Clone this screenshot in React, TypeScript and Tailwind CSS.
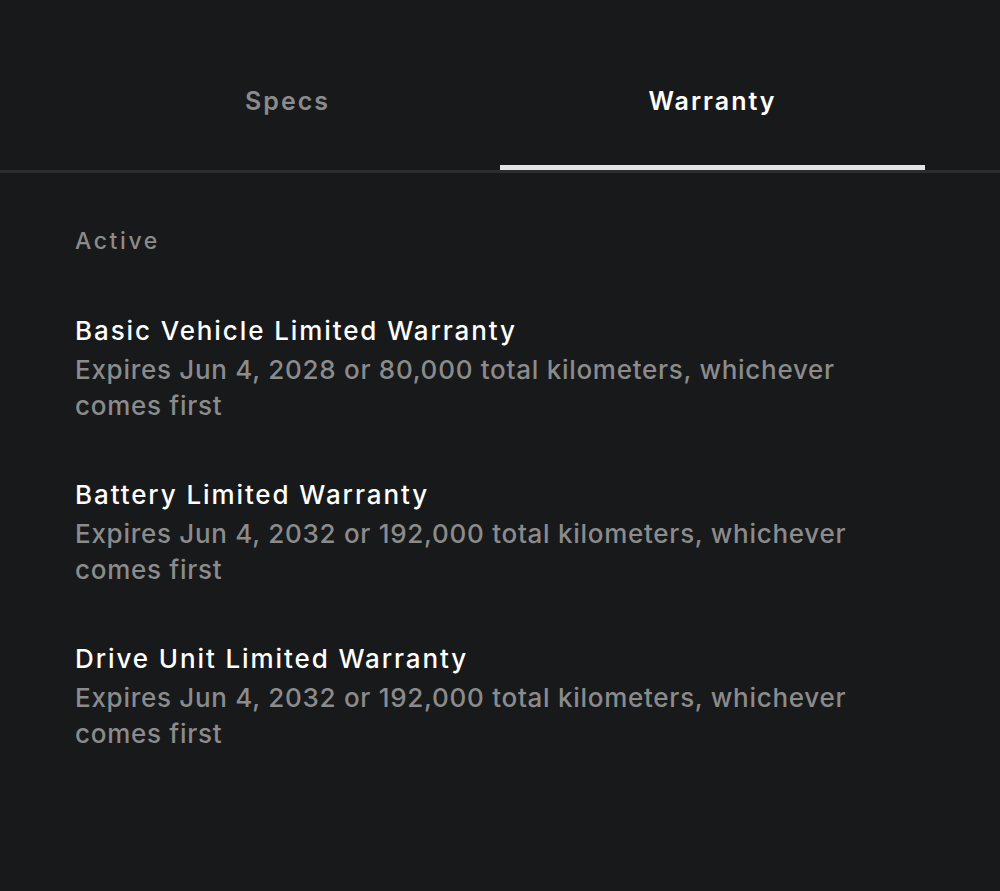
const warranties = [
  {
    title: "Basic Vehicle Limited Warranty",
    detail: "Expires Jun 4, 2028 or 80,000 total kilometers, whichever comes first",
  },
  {
    title: "Battery Limited Warranty",
    detail: "Expires Jun 4, 2032 or 192,000 total kilometers, whichever comes first",
  },
  {
    title: "Drive Unit Limited Warranty",
    detail: "Expires Jun 4, 2032 or 192,000 total kilometers, whichever comes first",
  },
];

export default function App() {
  return (
    <div className="min-h-[891px] w-full bg-[#18191b] font-['Inter',sans-serif] antialiased">
      <div className="border-b-[3px] border-[#2c2d30] px-[75px] pt-[82px]">
        <div className="flex">
          <button className="flex-1 pb-[50px] text-[25px] font-semibold leading-[38px] tracking-[2px] text-[#8b8b8c]">
            Specs
          </button>
          <button className="flex-1 border-b-[5px] border-[#e4e4e4] pb-[45px] text-[25px] font-semibold leading-[38px] tracking-[2px] text-white">
            Warranty
          </button>
        </div>
      </div>

      <div className="px-[75px] pt-[50px]">
        <p className="text-[23px] font-medium leading-[36px] tracking-[2.6px] text-[#8b8b8c]">Active</p>
        <div className="mt-[52px] flex flex-col gap-[51px]">
          {warranties.map((w) => (
            <div key={w.title} className="max-w-[800px]">
              <p className="text-[26px] font-medium leading-[40px] tracking-[1.9px] text-white">{w.title}</p>
              <p className="mt-[1px] text-[26px] font-medium leading-[36px] tracking-[0.72px] text-[#8b8b8c]">
                {w.detail}
              </p>
            </div>
          ))}
        </div>
      </div>
    </div>
  );
}
